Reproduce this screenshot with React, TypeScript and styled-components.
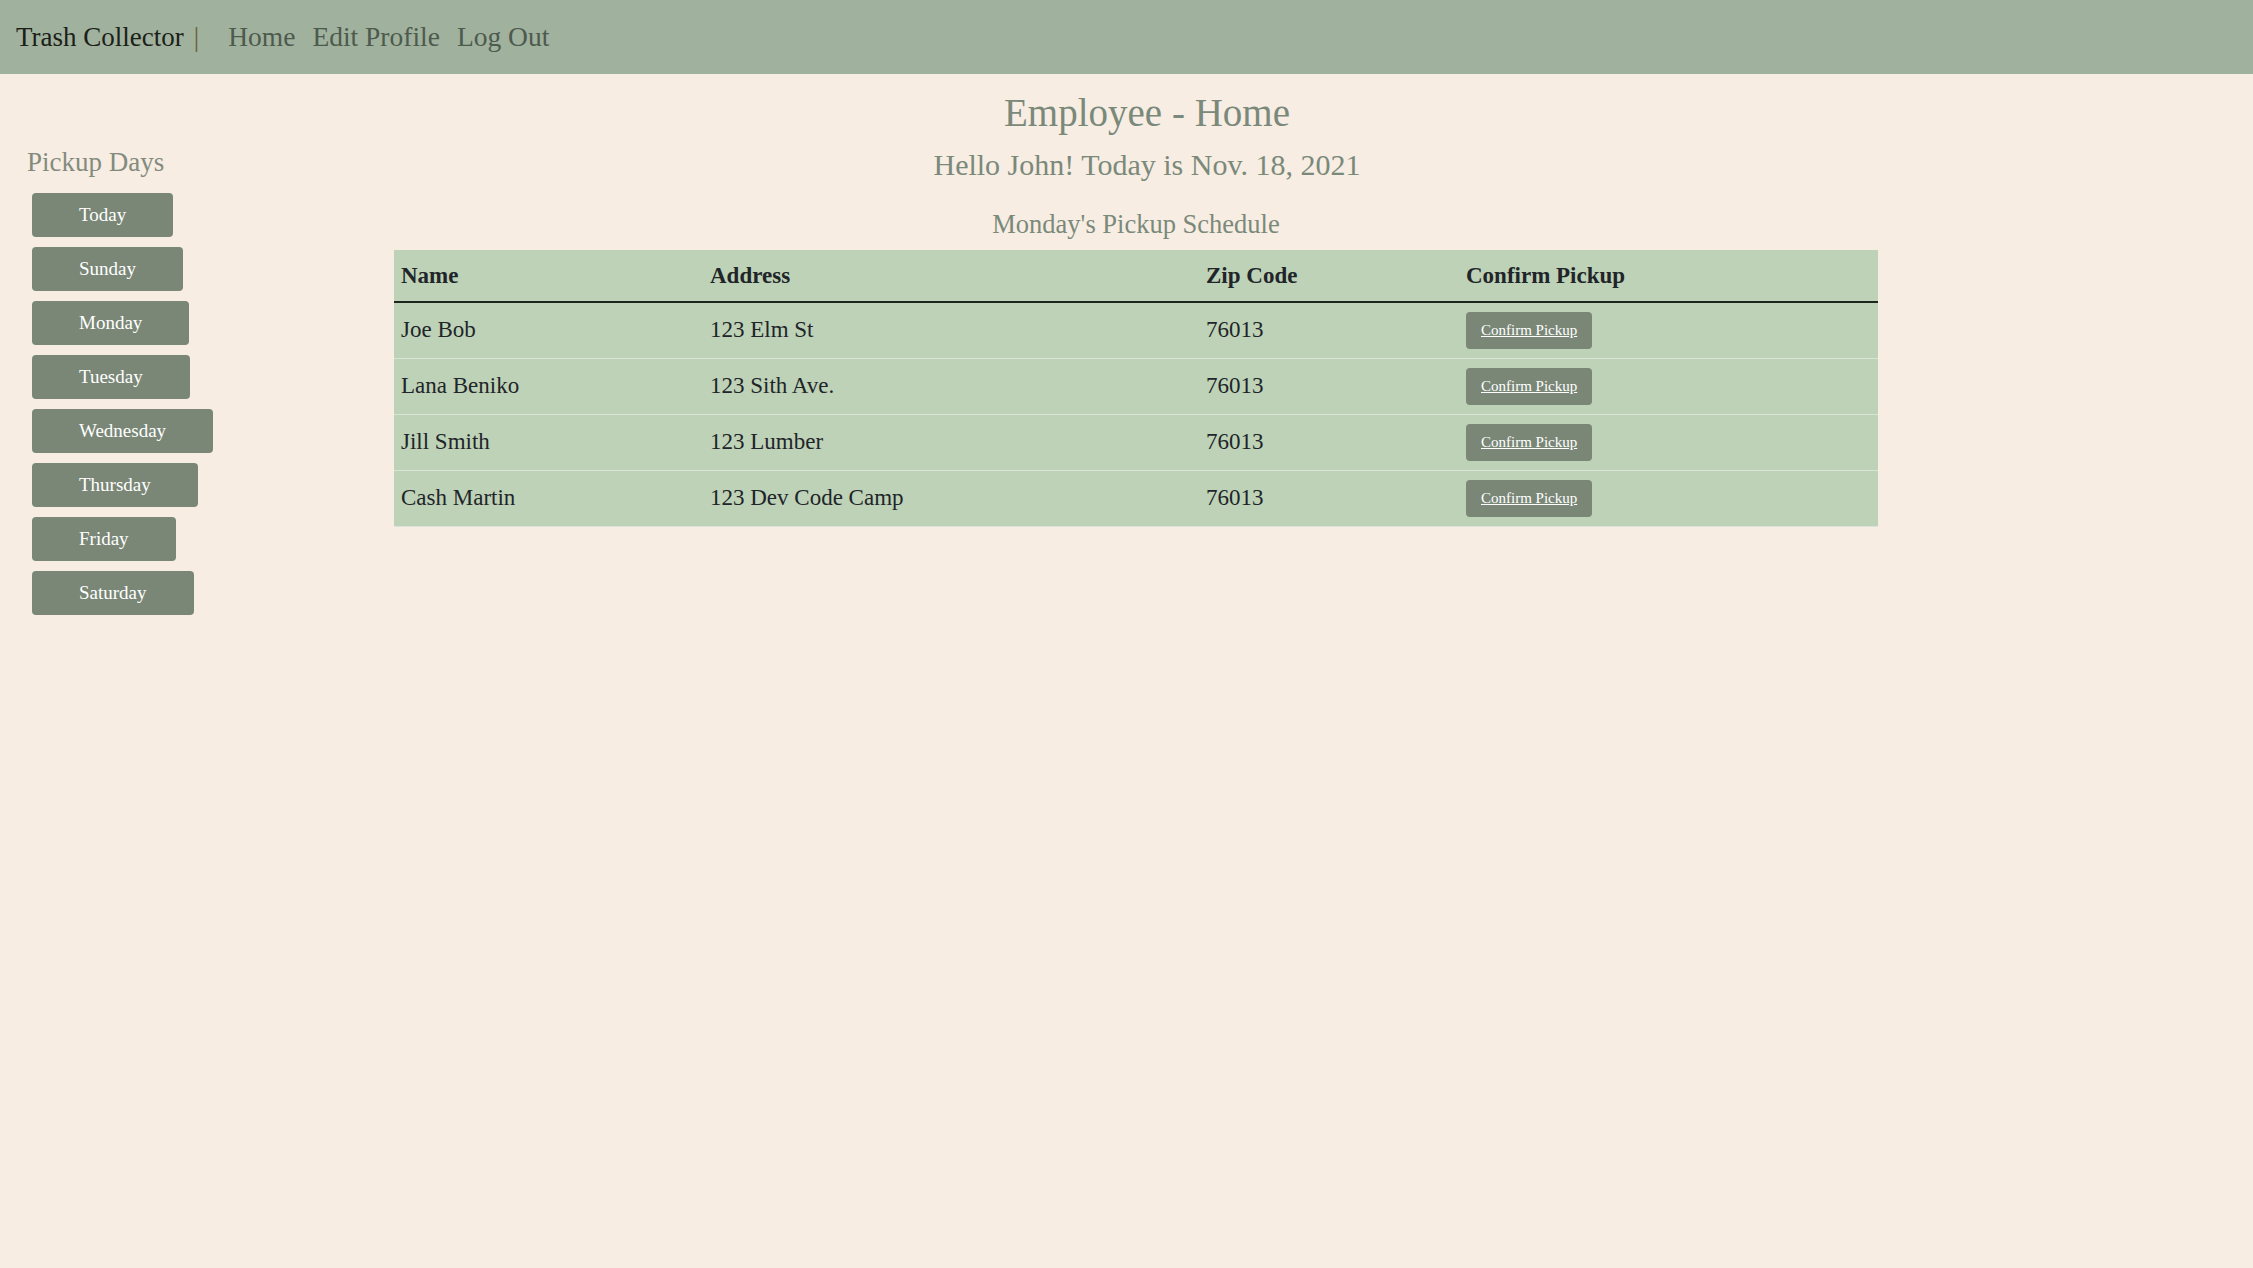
import React from "react";
import styled, { createGlobalStyle } from "styled-components";

const GlobalStyle = createGlobalStyle`
  html, body {
    margin: 0;
    padding: 0;
    background: #f7ede3;
    font-family: "Liberation Serif", "Times New Roman", serif;
    color: #212529;
  }
  * { box-sizing: border-box; }
`;

const Page = styled.div`
  min-height: 1268px;
  background: #f7ede3;
`;

const NavBar = styled.nav`
  height: 74px;
  background: #a0b19d;
  display: flex;
  align-items: center;
  padding: 0 16px;
  font-size: 27px;
`;

const Brand = styled.span`
  color: #1b2018;
`;

const Pipe = styled.span`
  color: #6d5e35;
  margin-left: 10px;
  margin-right: 29px;
`;

const NavLink = styled.a<{ $first?: boolean }>`
  color: #4d5a4e;
  text-decoration: none;
  font-size: 27.5px;
  margin-left: ${(p) => (p.$first ? "0" : "17px")};
`;

const Body = styled.div`
  display: flex;
  align-items: flex-start;
`;

const Sidebar = styled.aside`
  width: 394px;
  flex-shrink: 0;
  padding-left: 27px;
  padding-top: 72px;
`;

const SideHeading = styled.h3`
  margin: 0;
  font-weight: normal;
  font-size: 27px;
  line-height: 32px;
  color: #838b7f;
`;

const DayList = styled.div`
  display: flex;
  flex-direction: column;
  align-items: flex-start;
  gap: 10px;
  margin-top: 15px;
  padding-left: 5px;
`;

const DayButton = styled.button`
  height: 44px;
  padding: 0 47px;
  border: none;
  border-radius: 4px;
  background: #7a8777;
  color: #ffffff;
  font-family: "Liberation Serif", "Times New Roman", serif;
  font-size: 19px;
  cursor: pointer;
`;

const Main = styled.main`
  width: 1506px;
  padding-top: 15px;
  display: flex;
  flex-direction: column;
  align-items: center;
`;

const Title = styled.h1`
  margin: 0;
  font-weight: normal;
  font-size: 39px;
  line-height: 47px;
  color: #7a897a;
`;

const Greeting = styled.h2`
  margin: 11px 0 0;
  font-weight: normal;
  font-size: 30px;
  line-height: 36px;
  color: #7a897a;
`;

const ScheduleSection = styled.section`
  align-self: flex-start;
  width: 1484px;
  display: flex;
  flex-direction: column;
  align-items: center;
  margin-top: 25px;
`;

const ScheduleTitle = styled.h3`
  margin: 0;
  font-weight: normal;
  font-size: 26.5px;
  line-height: 32px;
  color: #7a897a;
`;

const Table = styled.table`
  margin-top: 10px;
  width: 1484px;
  table-layout: fixed;
  border-collapse: collapse;
  background: #bed2b7;
  font-size: 23px;
  color: #212529;
`;

const HeadCell = styled.th`
  text-align: left;
  font-weight: bold;
  height: 52px;
  padding: 0 7px;
  vertical-align: middle;
  border-bottom: 2px solid #1d261d;
`;

const Row = styled.tr`
  height: 56px;
  border-bottom: 1px solid #dbe5d7;
`;

const Cell = styled.td`
  padding: 0 7px;
  vertical-align: middle;
`;

const ConfirmButton = styled.a`
  display: inline-flex;
  align-items: center;
  height: 37px;
  padding: 0 15px;
  border-radius: 4px;
  background: #7a8777;
  color: #ffffff;
  font-size: 15px;
  text-decoration: underline;
  cursor: pointer;
`;

const days = ["Today", "Sunday", "Monday", "Tuesday", "Wednesday", "Thursday", "Friday", "Saturday"];

const pickups = [
  { name: "Joe Bob", address: "123 Elm St", zip: "76013" },
  { name: "Lana Beniko", address: "123 Sith Ave.", zip: "76013" },
  { name: "Jill Smith", address: "123 Lumber", zip: "76013" },
  { name: "Cash Martin", address: "123 Dev Code Camp", zip: "76013" },
];

const colWidths = [309, 496, 260, 419];

export default function App() {
  return (
    <Page>
      <GlobalStyle />
      <NavBar>
        <Brand>Trash Collector</Brand>
        <Pipe>|</Pipe>
        <NavLink $first>Home</NavLink>
        <NavLink>Edit Profile</NavLink>
        <NavLink>Log Out</NavLink>
      </NavBar>
      <Body>
        <Sidebar>
          <SideHeading>Pickup Days</SideHeading>
          <DayList>
            {days.map((d) => (
              <DayButton key={d}>{d}</DayButton>
            ))}
          </DayList>
        </Sidebar>
        <Main>
          <Title>Employee - Home</Title>
          <Greeting>Hello John! Today is Nov. 18, 2021</Greeting>
          <ScheduleSection>
            <ScheduleTitle>Monday's Pickup Schedule</ScheduleTitle>
            <Table>
              <colgroup>
                {colWidths.map((w, i) => (
                  <col key={i} style={{ width: w }} />
                ))}
              </colgroup>
              <thead>
                <tr>
                  <HeadCell>Name</HeadCell>
                  <HeadCell>Address</HeadCell>
                  <HeadCell>Zip Code</HeadCell>
                  <HeadCell>Confirm Pickup</HeadCell>
                </tr>
              </thead>
              <tbody>
                {pickups.map((p) => (
                  <Row key={p.name}>
                    <Cell>{p.name}</Cell>
                    <Cell>{p.address}</Cell>
                    <Cell>{p.zip}</Cell>
                    <Cell>
                      <ConfirmButton>Confirm Pickup</ConfirmButton>
                    </Cell>
                  </Row>
                ))}
              </tbody>
            </Table>
          </ScheduleSection>
        </Main>
      </Body>
    </Page>
  );
}
